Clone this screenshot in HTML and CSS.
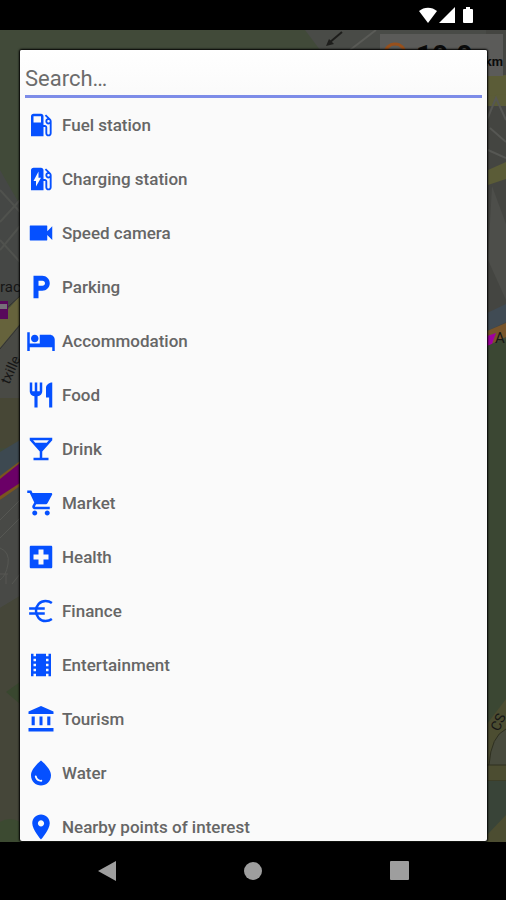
FILE: index.html
```html
<!DOCTYPE html>
<html lang="en">
<head>
<meta charset="utf-8">
<meta name="viewport" content="width=device-width, initial-scale=1">
<title>Points of interest</title>
<link rel="stylesheet" href="styles.css">
</head>
<body>
<header class="status-bar">
  <svg class="status-icons" viewBox="0 0 56 18" aria-hidden="true">
    <path d="M0 4C5-.5 13-.5 18 4L9 16z"/>
    <path d="M20 16 36 0v16z"/>
    <path d="M47 0h4v2h2q1 0 1 1v12q0 1-1 1h-8q-1 0-1-1V3q0-1 1-1h2z"/>
  </svg>
</header>

<main class="stage">
  <svg class="map" viewBox="0 30 506 812" preserveAspectRatio="none" aria-hidden="true">
    <rect y="30" width="506" height="812" fill="#414a39"/>
    <path d="M0 170 20 205V300L0 310z" fill="#454745"/>
    <path d="M0 190 20 212M0 222 20 200M0 250 20 226M0 240 20 262" stroke="#50524e" stroke-width="2"/>
    <path d="M0 318 20 296v28L0 348z" fill="#66633c"/>
    <path d="M0 348 20 324v98L0 440z" fill="#494a45"/>
    <path d="M0 314 20 296M0 349 20 325" stroke="#34342f" stroke-width="1"/>
    <path d="M0 398h20v50H0z" fill="#474736"/>
    <path d="M0 452 20 440v24L0 478z" fill="#3d4951"/>
    <path d="M0 476 20 461v28L0 500z" fill="#79551f"/>
    <path d="M0 479 20 463v20L0 496z" fill="#6b0067"/>
    <path d="M0 500 20 486v110L0 608z" fill="#484946"/>
    <path d="M0 520 20 500M0 538 20 518M0 548q10 4 8 16T0 580M0 574h8M6 574v10M12 584l8-10" fill="none" stroke="#565753" stroke-width="1"/>
    <path d="M0 608 20 596v246H0z" fill="#454639"/>
    <path d="m6 692 14-10v22z" fill="#39472f"/>
    <path d="M0 822q10-6 20 0v20H0z" fill="#3c4a31"/>
    <path d="M0 301h8v18H0z" fill="#58095b"/>
    <path d="M0 304h7v5H0z" fill="#77707a"/>
    <text x="0" y="292" font-size="15" fill="#161616">rac</text>
    <text transform="translate(9 385) rotate(-66)" font-size="14" fill="#161616">txille</text>

    <path d="M305 30h201v20H320z" fill="#494b47"/>
    <path d="M350 50 376 30" stroke="#5a5b57" stroke-width="2"/>
    <path d="m342 32-13 11" stroke="#1d1d1b" stroke-width="2"/>
    <path d="m326 46 3-7 5 5z" fill="#1d1d1b"/>
    <path d="M486 30h20v300h-20z" fill="#444541"/>
    <path d="M486 106h20v-12h-20z" fill="#5b5c37"/>
    <path d="m486 76 20-1v19l-20 2z" fill="#5b5c37"/>
    <path d="m486 122 10-24 10 22M490 128l16 14M488 150l18 8" fill="none" stroke="#565753" stroke-width="2"/>
    <path d="m488 170 18-8v17l-18 6z" fill="#5b5c37"/>
    <path d="m492 186 14 38v76l-18-40z" fill="#4d4e4a"/>
    <path d="m487 313 19-9v18l-19 9z" fill="#404b54"/>
    <path d="m487 331 19-8v14l-19 9z" fill="#78552b"/>
    <path d="m487 336 9-3-4 11-5 2z" fill="#a000a0"/>
    <path d="m487 346 19-7v503h-19z" fill="#3b4733"/>
    <text x="495" y="343" font-size="15" fill="#171717">A</text>
    <path d="m487 724 19-25v143h-19z" fill="#4c4d31"/>
    <path d="M489 765q2-29 17-36v36z" fill="#484b3d"/>
    <path d="M489 765q2-29 17-36M487 765h19M487 781h19" fill="none" stroke="#2f3020" stroke-width="1"/>
    <path d="M487 781h19v34l-19 20z" fill="#394438"/>
    <text transform="translate(499 732) rotate(-66)" font-size="14" fill="#161616">CS</text>

    <path d="M380 34h123v42H380z" fill="#5b5b59"/>
    <circle cx="395" cy="54" r="10" fill="none" stroke="#98501c" stroke-width="3"/>
    <text x="416" y="65" font-size="28" font-weight="700" fill="#0b0b0b">10.0</text>
    <text x="503" y="66" font-size="13" font-weight="700" text-anchor="end" fill="#0b0b0b">km</text>
  </svg>

  <section class="dialog" aria-label="Points of interest">
    <div class="search">
      <input class="search-input" type="text" placeholder="Search…" aria-label="Search">
    </div>
    <ul class="list">
      <li><button class="item" type="button"><svg class="icon" viewBox="0 0 24 24"><path d="M19.77 7.23l.01-.01-3.72-3.72L15 4.56l2.11 2.11c-.94.36-1.61 1.26-1.61 2.33 0 1.38 1.12 2.5 2.5 2.5.36 0 .69-.08 1-.21v7.21c0 .55-.45 1-1 1s-1-.45-1-1V14c0-1.1-.9-2-2-2h-1V5c0-1.1-.9-2-2-2H6c-1.1 0-2 .9-2 2v16h10v-7.5h1.5v5c0 1.38 1.12 2.5 2.5 2.5s2.5-1.12 2.5-2.5V9c0-.69-.28-1.32-.73-1.77zM12 10H6V5h6v5zm6 0c-.55 0-1-.45-1-1s.45-1 1-1 1 .45 1 1-.45 1-1 1z"/></svg>Fuel station</button></li>
      <li><button class="item" type="button"><svg class="icon" viewBox="0 0 24 24"><path d="M19.77 7.23l.01-.01-3.72-3.72L15 4.56l2.11 2.11c-.94.36-1.61 1.26-1.61 2.33 0 1.38 1.12 2.5 2.5 2.5.36 0 .69-.08 1-.21v7.21c0 .55-.45 1-1 1s-1-.45-1-1V14c0-1.1-.9-2-2-2h-1V5c0-1.1-.9-2-2-2H6c-1.1 0-2 .9-2 2v16h10v-7.5h1.5v5c0 1.38 1.12 2.5 2.5 2.5s2.5-1.12 2.5-2.5V9c0-.69-.28-1.32-.73-1.77zM18 10c-.55 0-1-.45-1-1s.45-1 1-1 1 .45 1 1-.45 1-1 1zM8 18v-4.5H6L10 6v5h2l-4 7z"/></svg>Charging station</button></li>
      <li><button class="item" type="button"><svg class="icon" viewBox="0 0 24 24"><path d="M17 10.5V6.400c0-.2-.2-.4-.4-.4H3.400c-.2 0-.4.200-.4.400v11.200c0 .2.200.4.400.4h13.200c.2 0 .4-.2.400-.4v-4.100l4 4v-11l-4 4z"/></svg>Speed camera</button></li>
      <li><button class="item" type="button"><svg class="icon" viewBox="0 0 24 24"><path d="M13 3H6v18h4v-6h3c3.31 0 6-2.69 6-6s-2.69-6-6-6zm.2 8H10V7h3.2c1.1 0 2 .9 2 2s-.9 2-2 2z"/></svg>Parking</button></li>
      <li><button class="item" type="button"><svg class="icon" viewBox="0 0 24 24"><path d="M7 13c1.66 0 3-1.34 3-3S8.66 7 7 7s-3 1.34-3 3 1.34 3 3 3zm12-6h-8v7H3V5H1v15h2v-3h18v3h2v-9c0-2.21-1.79-4-4-4z"/></svg>Accommodation</button></li>
      <li><button class="item" type="button"><svg class="icon" viewBox="0 0 24 24"><path d="M11 9H9V2H7v7H5V2H3v7c0 2.12 1.66 3.84 3.75 3.97V22h2.5v-9.03C11.34 12.84 13 11.12 13 9V2h-2v7zm5-3v8h2.5v8H21V2c-2.76 0-5 2.24-5 4z"/></svg>Food</button></li>
      <li><button class="item" type="button"><svg class="icon" viewBox="0 0 24 24"><path d="M21 5V3H3v2l8 9v5H6v2h12v-2h-5v-5l8-9zM7.43 7L5.66 5h12.69l-1.78 2H7.43z"/></svg>Drink</button></li>
      <li><button class="item" type="button"><svg class="icon" viewBox="0 0 24 24"><path d="M7 18c-1.1 0-1.99.9-1.99 2S5.9 22 7 22s2-.9 2-2-.9-2-2-2zM1 2v2h2l3.6 7.59-1.35 2.45c-.16.28-.25.61-.25.96 0 1.1.9 2 2 2h12v-2H7.42c-.14 0-.25-.11-.25-.25l.03-.12.9-1.63h7.45c.75 0 1.41-.41 1.75-1.03l3.58-6.49c.08-.14.12-.31.12-.48 0-.55-.45-1-1-1H5.21l-.94-2H1zm16 16c-1.1 0-1.99.9-1.99 2s.89 2 1.99 2 2-.9 2-2-.9-2-2-2z"/></svg>Market</button></li>
      <li><button class="item" type="button"><svg class="icon" viewBox="0 0 24 24"><path d="M20 3H4c-.55 0-1 .45-1 1v16c0 .55.45 1 1 1h16c.55 0 1-.45 1-1V4c0-.55-.45-1-1-1zm-2 11h-4v4h-4v-4H6v-4h4V6h4v4h4v4z"/></svg>Health</button></li>
      <li><button class="item" type="button"><svg class="icon icon-line" viewBox="0 0 24 24"><path d="M20.7 5.6C19.2 4.5 17.4 4 15.6 4 11.2 4 8 7.6 8 12s3.200 8 7.600 8c1.800 0 3.600-.5 5.100-1.600M2.500 10H15M2.500 14H15"/></svg>Finance</button></li>
      <li><button class="item" type="button"><svg class="icon" viewBox="0 0 24 24"><path d="M18 3v2h-2V3H8v2H6V3H4v18h2v-2h2v2h8v-2h2v2h2V3h-2zM8 17H6v-2h2v2zm0-4H6v-2h2v2zm0-4H6V7h2v2zm10 8h-2v-2h2v2zm0-4h-2v-2h2v2zm0-4h-2V7h2v2z"/></svg>Entertainment</button></li>
      <li><button class="item" type="button"><svg class="icon" viewBox="0 0 24 24"><path d="M12 1.500 2 6v2h20V6zM4.500 10h2.500v7H4.500zM10.800 10h2.400v7h-2.400zM17 10h2.500v7H17zM2 19.200h20V22H2z"/></svg>Tourism</button></li>
      <li><button class="item" type="button"><svg class="icon" viewBox="0 0 24 24"><path d="M12 2c-5.33 4.550-8 8.480-8 11.800 0 4.980 3.800 8.200 8 8.200s8-3.220 8-8.200c0-3.320-2.670-7.250-8-11.800zM7.830 14c.37 0 .67.26.74.62.41 2.220 2.280 2.980 3.640 2.870.43-.02.79.32.79.75 0 .4-.32.73-.72.75-2.130.13-4.620-1.090-5.190-4.120-.08-.45.28-.87.74-.87z"/></svg>Water</button></li>
      <li><button class="item" type="button"><svg class="icon" viewBox="0 0 24 24"><path d="M12 2C8.130 2 5 5.130 5 9c0 5.250 7 13 7 13s7-7.750 7-13c0-3.870-3.130-7-7-7zm0 9.500c-1.380 0-2.500-1.120-2.500-2.500s1.120-2.500 2.500-2.500 2.500 1.120 2.500 2.500-1.120 2.500-2.500 2.500z"/></svg>Nearby points of interest</button></li>
    </ul>
  </section>
</main>

<nav class="nav-bar" aria-label="System">
  <button class="nav-button" type="button" aria-label="Back"><svg class="nav-icon" viewBox="0 0 20 20"><path d="M19 0v20L1 10z"/></svg></button>
  <button class="nav-button" type="button" aria-label="Home"><svg class="nav-icon" viewBox="0 0 20 20"><circle cx="10" cy="10" r="9"/></svg></button>
  <button class="nav-button" type="button" aria-label="Recent apps"><svg class="nav-icon" viewBox="0 0 20 20"><rect width="19" height="19" rx="1"/></svg></button>
</nav>
</body>
</html>
```
FILE: styles.css
```css
* {
  box-sizing: border-box;
}

body {
  margin: 0;
  height: 100vh;
  display: flex;
  flex-direction: column;
  background: #000;
  font-family: Roboto, "Liberation Sans", sans-serif;
}

button,
input {
  font: inherit;
  border: 0;
  background: none;
  padding: 0;
}

.status-bar {
  flex: none;
  height: 30px;
  padding: 7px 31px 0;
  display: flex;
  justify-content: flex-end;
  align-items: flex-start;
}

.status-icons {
  width: 56px;
  height: 18px;
  fill: #fff;
}

.stage {
  position: relative;
  flex: 1;
  min-height: 0;
  display: flex;
  padding: 20px 19px 1px 20px;
}

.map {
  position: absolute;
  inset: 0;
  width: 100%;
  height: 100%;
}

.dialog {
  position: relative;
  flex: 1;
  min-width: 0;
  display: flex;
  flex-direction: column;
  overflow: hidden;
  border-radius: 2px;
  background: #fafafa;
  box-shadow: 0 0 2px 1px #000;
}

.search {
  flex: none;
  padding: 8px 5px 0;
  background: linear-gradient(#fff, #fafafa);
}

.search-input {
  display: block;
  width: 100%;
  height: 40px;
  padding-top: 3px;
  border-bottom: 3px solid #7d8ce8;
  outline: 0;
  color: #333;
  font-size: 22px;
}

.search-input::placeholder {
  color: #6c6c6c;
  opacity: 1;
}

.list {
  flex: 1;
  min-height: 0;
  margin: 0;
  padding: 0;
  list-style: none;
  overflow-y: auto;
  scrollbar-width: none;
}

.item {
  width: 100%;
  height: 54px;
  padding: 0 6px;
  display: flex;
  align-items: center;
  gap: 6px;
  color: #666;
  font-size: 17px;
  font-weight: 500;
  text-align: left;
}

.icon {
  flex: none;
  width: 30px;
  height: 30px;
  fill: #0550ff;
}

.icon-line {
  fill: none;
  stroke: #0550ff;
  stroke-width: 2;
}

.nav-bar {
  flex: none;
  height: 58px;
  padding: 0 33px 0 34px;
  display: flex;
}

.nav-button {
  flex: 1;
  display: flex;
  align-items: center;
  justify-content: center;
}

.nav-icon {
  width: 20px;
  height: 20px;
  fill: #9e9e9e;
}
```
